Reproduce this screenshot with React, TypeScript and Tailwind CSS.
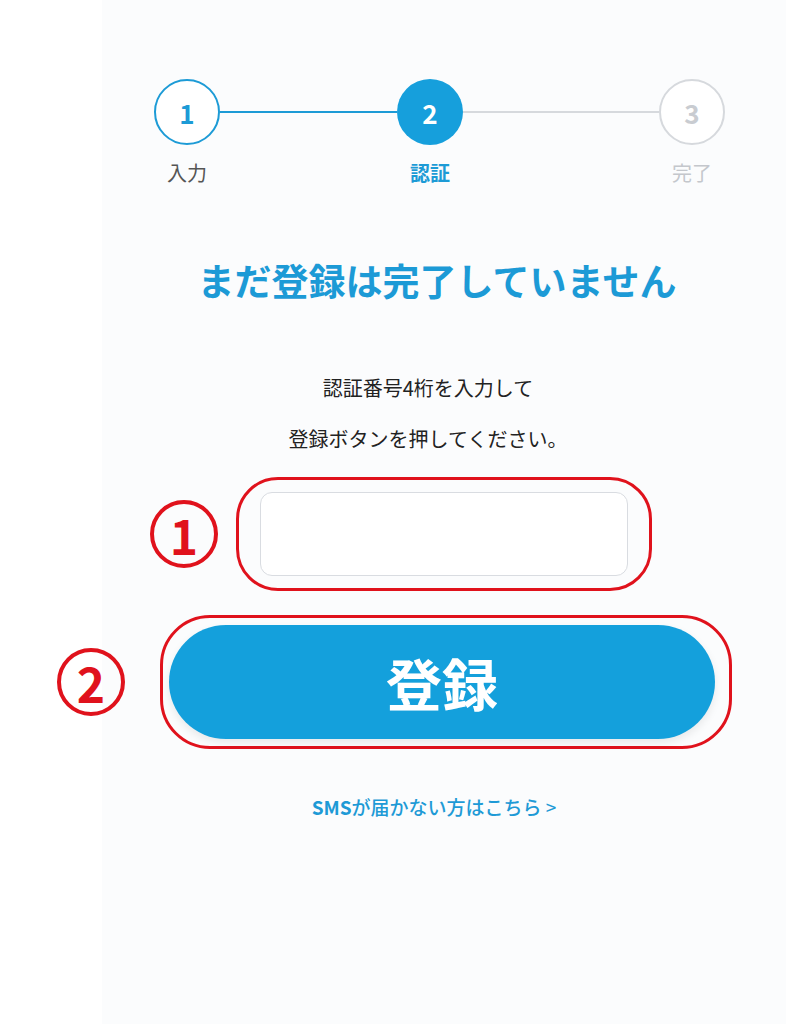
const FONT = { fontFamily: '"Noto Sans CJK JP", "Noto Sans", sans-serif' }

function Circled({ n }: { n: string }) {
  return (
    <div className="flex h-[68px] w-[68px] shrink-0 items-center justify-center rounded-full border-[4px] border-[#e0121c] text-[48px] font-bold leading-none text-[#e0121c]">
      {n}
    </div>
  )
}

export default function App() {
  return (
    <div
      className="min-h-[1024px] w-full bg-[linear-gradient(to_right,#ffffff_102px,#fbfcfd_102px)] text-[#222]"
      style={FONT}
    >
      {/* stepper */}
      <div className="flex pl-[154px] pt-[79px]">
        <div className="flex w-[66px] flex-col items-center">
          <div className="flex h-[66px] w-[66px] items-center justify-center rounded-full border-2 border-[#1d9bd6] bg-white text-[26px] font-bold text-[#1d9bd6]">
            1
          </div>
          <span className="mt-[13px] text-[20px] text-[#555]">入力</span>
        </div>
        <div className="mt-[32px] h-[2px] w-[177px] bg-[#1d9bd6]" />
        <div className="flex w-[66px] flex-col items-center">
          <div className="flex h-[66px] w-[66px] items-center justify-center rounded-full bg-[#169fdc] text-[26px] font-bold text-white">
            2
          </div>
          <span className="mt-[13px] text-[20px] font-bold text-[#1d9bd6]">認証</span>
        </div>
        <div className="mt-[32px] h-[2px] w-[196px] bg-[#d6d9dd]" />
        <div className="flex w-[66px] flex-col items-center">
          <div className="flex h-[66px] w-[66px] items-center justify-center rounded-full border-2 border-[#d6d9dd] bg-white text-[26px] font-bold text-[#c9ccd1]">
            3
          </div>
          <span className="mt-[13px] text-[20px] text-[#c4c7cc]">完了</span>
        </div>
      </div>

      {/* title */}
      <h1 className="mt-[71px] pl-[88px] text-center text-[37px] font-bold leading-[42px] text-[#1c9ad6]">
        まだ登録は完了していません
      </h1>

      {/* description */}
      <div className="mt-[73px] pl-[70px] text-center text-[20px] leading-[28px] text-[#222]">
        <p>認証番号4桁を入力して</p>
        <p className="mt-[23px]">登録ボタンを押してください。</p>
      </div>

      {/* input with annotation */}
      <div className="mt-[24px] flex items-center gap-[18px] pl-[150px]">
        <Circled n="1" />
        <div className="rounded-[42px] border-[3px] border-[#e0121c] px-[21px] py-[12px]">
          <input
            type="text"
            inputMode="numeric"
            className="block h-[84px] w-[368px] rounded-[12px] border border-[#d9dce1] bg-white px-4 text-[28px] outline-none"
          />
        </div>
      </div>

      {/* button with annotation */}
      <div className="mt-[24px] flex items-center gap-[35px] pl-[57px]">
        <Circled n="2" />
        <div className="rounded-[50px] border-[3px] border-[#e0121c] pb-[7px] pl-[6px] pr-[14px] pt-[7px]">
          <button className="flex h-[114px] w-[546px] items-center justify-center rounded-full bg-[#14a0dc] text-[56px] font-bold text-white shadow-[0_4px_8px_rgba(0,0,0,0.08)]">
            登録
          </button>
        </div>
      </div>

      {/* link */}
      <div className="mt-[44px] pl-[82px] text-center">
        <a className="text-[19px] font-medium text-[#1e9ad6]" href="#">
          <span className="font-bold">SMS</span>が届かない方はこちら <span className="font-normal">&gt;</span>
        </a>
      </div>
    </div>
  )
}
